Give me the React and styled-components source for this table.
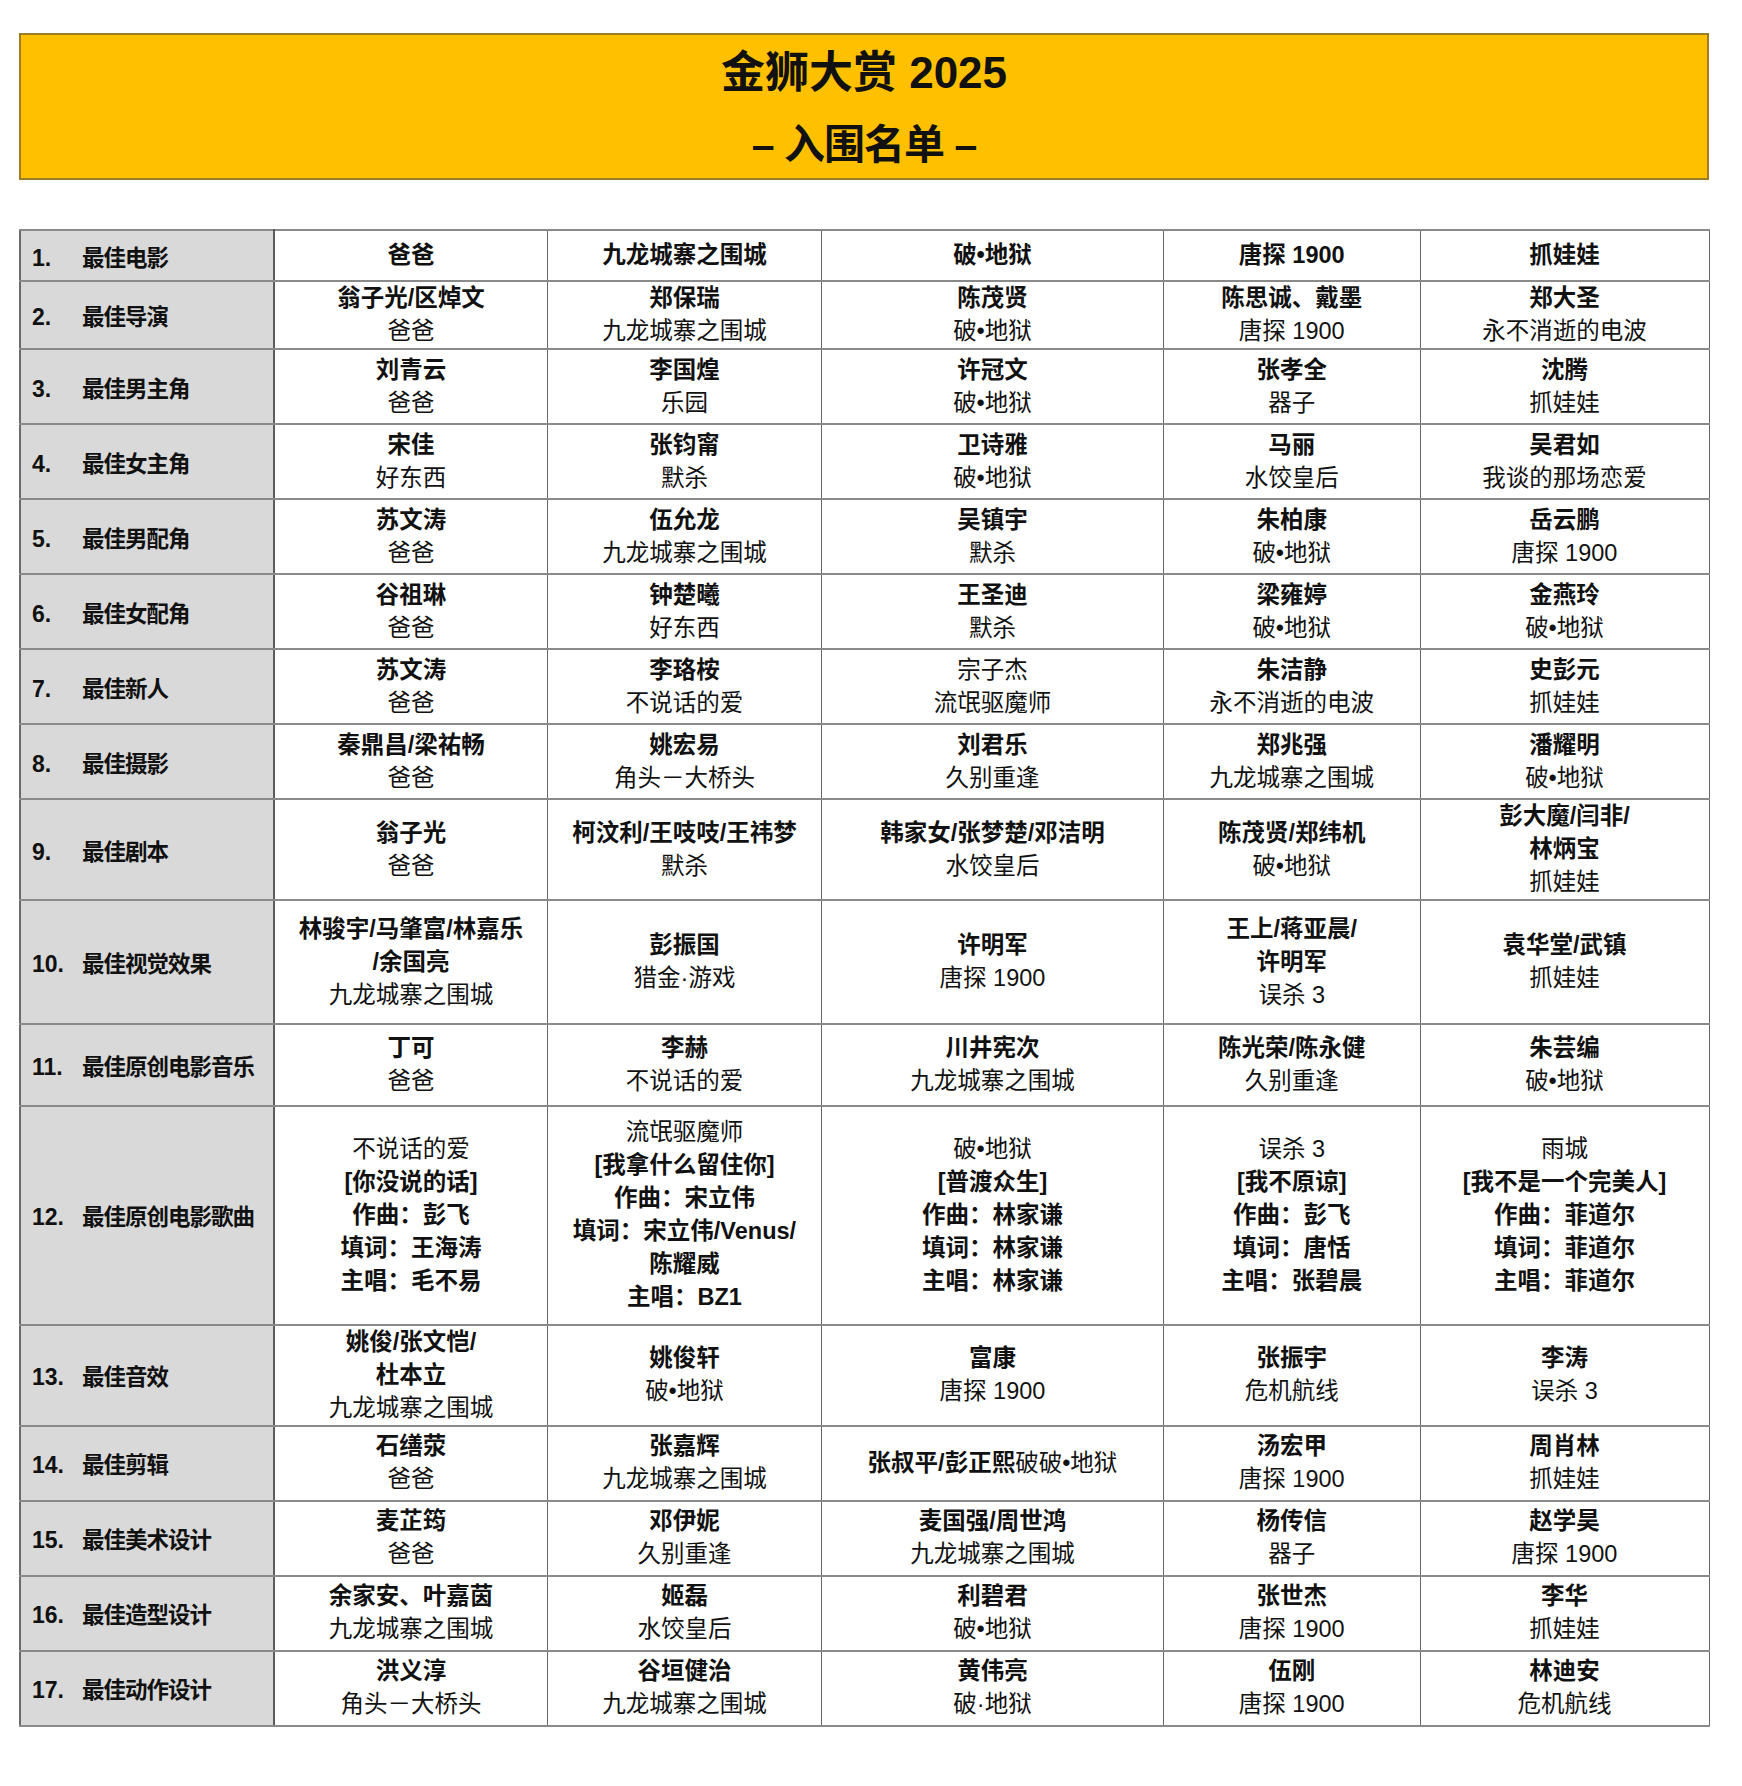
import React from 'react'
import styled, { createGlobalStyle } from 'styled-components'

const GlobalStyle = createGlobalStyle`
  body {
    margin: 0;
    background: #fff;
    color: #111;
    font-family: "Liberation Sans", "Noto Sans CJK SC", sans-serif;
  }
`

const Page = styled.div`
  width: 1692px;
  padding: 33px 0 57px 19px;
`

const Banner = styled.div`
  box-sizing: border-box;
  width: 1690px;
  height: 147px;
  padding-top: 4px;
  background: #ffc000;
  border: 2px solid #9a7d24;
  display: flex;
  flex-direction: column;
  align-items: center;
  justify-content: center;
`

const TitleLine = styled.div`
  font-size: ${p => p.$sub ? '41px' : '44px'};
  font-weight: 700;
  line-height: 73px;
  letter-spacing: ${p => p.$sub ? '-1px' : '0'};
`

const Table = styled.table`
  margin-top: 49px;
  width: 1689px;
  table-layout: fixed;
  border-collapse: collapse;
  font-size: 23.5px;
`

const Row = styled.tr`
  height: ${p => p.$h}px;
`

const LabelCell = styled.td`
  background: #d9d9d9;
  border-top: 2px solid #8a8a8a;
  border-bottom: 2px solid #8a8a8a;
  border-left: 2px solid #6b6b6b;
  border-right: 2px solid #5c5c5c;
  padding: 0 0 0 11px;
  font-weight: 700;
  white-space: nowrap;
`

const Num = styled.span`
  display: inline-block;
  width: 50px;
  font-size: 23px;
`

const Label = styled.span`
  font-size: 22.5px;
  letter-spacing: -1px;
`

const Cell = styled.td`
  border-top: 2px solid #8a8a8a;
  border-bottom: 2px solid #8a8a8a;
  border-left: 1.5px solid #666;
  border-right: 1.5px solid #666;
  text-align: center;
  vertical-align: middle;
  padding: 0;
  line-height: 33px;
  white-space: nowrap;
`

const Line = styled.div``

const Seg = styled.span`
  font-weight: ${p => p.$bold ? 700 : 400};
`

const c = (name, film) => `${name}\n~${film}`

// lines split by \n; inside a line "~" switches bold -> regular
const rows = [
  ['最佳电影', 51.3, ['爸爸', '九龙城寨之围城', '破•地狱', '唐探 1900', '抓娃娃']],
  ['最佳导演', 68, [c('翁子光/区焯文', '爸爸'), c('郑保瑞', '九龙城寨之围城'), c('陈茂贤', '破•地狱'), c('陈思诚、戴墨', '唐探 1900'), c('郑大圣', '永不消逝的电波')]],
  ['最佳男主角', 75.1, [c('刘青云', '爸爸'), c('李国煌', '乐园'), c('许冠文', '破•地狱'), c('张孝全', '器子'), c('沈腾', '抓娃娃')]],
  ['最佳女主角', 75, [c('宋佳', '好东西'), c('张钧甯', '默杀'), c('卫诗雅', '破•地狱'), c('马丽', '水饺皇后'), c('吴君如', '我谈的那场恋爱')]],
  ['最佳男配角', 74.9, [c('苏文涛', '爸爸'), c('伍允龙', '九龙城寨之围城'), c('吴镇宇', '默杀'), c('朱柏康', '破•地狱'), c('岳云鹏', '唐探 1900')]],
  ['最佳女配角', 75, [c('谷祖琳', '爸爸'), c('钟楚曦', '好东西'), c('王圣迪', '默杀'), c('梁雍婷', '破•地狱'), c('金燕玲', '破•地狱')]],
  ['最佳新人', 75, [c('苏文涛', '爸爸'), c('李珞桉', '不说话的爱'), '~宗子杰\n~流氓驱魔师', c('朱洁静', '永不消逝的电波'), c('史彭元', '抓娃娃')]],
  ['最佳摄影', 75, [c('秦鼎昌/梁祐畅', '爸爸'), c('姚宏易', '角头－大桥头'), c('刘君乐', '久别重逢'), c('郑兆强', '九龙城寨之围城'), c('潘耀明', '破•地狱')]],
  ['最佳剧本', 98.8, [c('翁子光', '爸爸'), c('柯汶利/王吱吱/王祎梦', '默杀'), c('韩家女/张梦楚/邓洁明', '水饺皇后'), c('陈茂贤/郑纬机', '破•地狱'), c('彭大魔/闫非/\n林炳宝', '抓娃娃')]],
  ['最佳视觉效果', 124, [c('林骏宇/马肇富/林嘉乐\n/余国亮', '九龙城寨之围城'), c('彭振国', '猎金·游戏'), c('许明军', '唐探 1900'), c('王上/蒋亚晨/\n许明军', '误杀 3'), c('袁华堂/武镇', '抓娃娃')]],
  ['最佳原创电影音乐', 81.8, [c('丁可', '爸爸'), c('李赫', '不说话的爱'), c('川井宪次', '九龙城寨之围城'), c('陈光荣/陈永健', '久别重逢'), c('朱芸编', '破•地狱')]],
  ['最佳原创电影歌曲', 218.6, [
    '~不说话的爱\n[你没说的话]\n作曲：彭飞\n填词：王海涛\n主唱：毛不易',
    '~流氓驱魔师\n[我拿什么留住你]\n作曲：宋立伟\n填词：宋立伟/Venus/\n陈耀威\n主唱：BZ1',
    '~破•地狱\n[普渡众生]\n作曲：林家谦\n填词：林家谦\n主唱：林家谦',
    '~误杀 3\n[我不原谅]\n作曲：彭飞\n填词：唐恬\n主唱：张碧晨',
    '~雨城\n[我不是一个完美人]\n作曲：菲道尔\n填词：菲道尔\n主唱：菲道尔',
  ]],
  ['最佳音效', 101, [c('姚俊/张文恺/\n杜本立', '九龙城寨之围城'), c('姚俊轩', '破•地狱'), c('富康', '唐探 1900'), c('张振宇', '危机航线'), c('李涛', '误杀 3')]],
  ['最佳剪辑', 75, [c('石缮荥', '爸爸'), c('张嘉辉', '九龙城寨之围城'), '张叔平/彭正熙~破破•地狱', c('汤宏甲', '唐探 1900'), c('周肖林', '抓娃娃')]],
  ['最佳美术设计', 75, [c('麦芷筠', '爸爸'), c('邓伊妮', '久别重逢'), c('麦国强/周世鸿', '九龙城寨之围城'), c('杨传信', '器子'), c('赵学昊', '唐探 1900')]],
  ['最佳造型设计', 75, [c('余家安、叶嘉茵', '九龙城寨之围城'), c('姬磊', '水饺皇后'), c('利碧君', '破•地狱'), c('张世杰', '唐探 1900'), c('李华', '抓娃娃')]],
  ['最佳动作设计', 75, [c('洪义淳', '角头－大桥头'), c('谷垣健治', '九龙城寨之围城'), c('黄伟亮', '破·地狱'), c('伍刚', '唐探 1900'), c('林迪安', '危机航线')]],
]

const colWidths = [254, 273.5, 274, 342, 256.5, 289]

function CellText({ text }) {
  return text.split('\n').map((line, i) => (
    <Line key={i}>
      {line.split('~').map((seg, j) => seg && <Seg key={j} $bold={j === 0}>{seg}</Seg>)}
    </Line>
  ))
}

export default function App() {
  return (
    <Page>
      <GlobalStyle />
      <Banner>
        <TitleLine>金狮大赏 2025</TitleLine>
        <TitleLine $sub>– 入围名单 –</TitleLine>
      </Banner>
      <Table>
        <colgroup>
          {colWidths.map((w, i) => <col key={i} style={{ width: w }} />)}
        </colgroup>
        <tbody>
          {rows.map(([label, h, cells], i) => (
            <Row key={label} $h={h}>
              <LabelCell>
                <Num>{i + 1}.</Num>
                <Label>{label}</Label>
              </LabelCell>
              {cells.map((t, j) => (
                <Cell key={j}><CellText text={t} /></Cell>
              ))}
            </Row>
          ))}
        </tbody>
      </Table>
    </Page>
  )
}
